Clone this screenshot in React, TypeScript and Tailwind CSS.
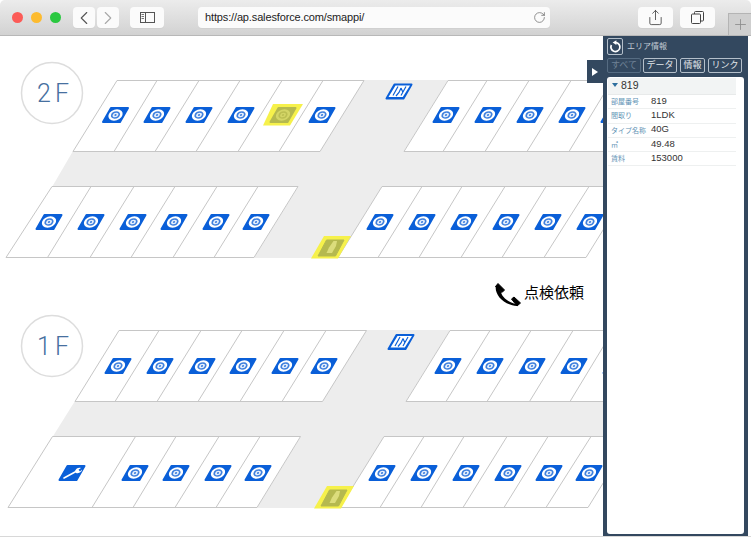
import React from "react";
import { ChevronLeft, ChevronRight, Share, RotateCw, Plus } from "lucide-react";

const BLUE = "#0a5fd8";
const LINE = "#c6c6c6";
const GREY = "#ededed";

function Ring({ fg, mid, hi }: { fg: string; mid: string; hi: string }) {
  return (
    <g transform="skewX(-15)">
      <ellipse cx="0" cy="0" rx="7" ry="5.8" fill={fg} />
      <ellipse cx="0" cy="0" rx="4.5" ry="3.7" fill={mid} />
      <ellipse cx="0" cy="0" rx="2.8" ry="2.3" fill={hi} />
      <ellipse cx="0" cy="0" rx="1.1" ry="0.9" fill={mid} />
    </g>
  );
}

function Base({ x, y, fill = BLUE, children }: { x: number; y: number; fill?: string; children?: React.ReactNode }) {
  return (
    <g transform={`translate(${x} ${y})`}>
      <polygon points="-4.5,-7 12.5,-7 4.5,7 -12.5,7" fill={fill} stroke={fill} strokeWidth="2" strokeLinejoin="round" />
      {children}
    </g>
  );
}

function Park({ x, y }: { x: number; y: number }) {
  return (
    <Base x={x} y={y}>
      <Ring fg="#ffffff" mid="#3f80de" hi="#e6effc" />
    </Base>
  );
}

function ParkSelected({ x, y }: { x: number; y: number }) {
  return (
    <g>
      <g transform={`translate(${x} ${y})`}>
        <polygon points="-10,-11 20,-11 7,10.5 -20,10.5" fill="#f6f14b" />
      </g>
      <Base x={x} y={y} fill="#b5b94f">
        <Ring fg="#d3d566" mid="#bcbf52" hi="#d3d566" />
      </Base>
    </g>
  );
}

function Wrench({ x, y }: { x: number; y: number }) {
  return (
    <Base x={x} y={y}>
      <path d="M-8 5 L4 -1.5" stroke="#fff" strokeWidth="1.6" strokeLinecap="round" />
      <path d="M3 -2 C4 -5 7 -6 9 -5 L6.5 -3.2 L8 -1.5 L10 -3.4 C10 -1 7 1 4 0 Z" fill="#fff" />
    </Base>
  );
}

function Stairs({ x, y }: { x: number; y: number }) {
  return (
    <Base x={x} y={y}>
      <polygon points="-3.5,-6 11,-6 3.8,5.5 -10.5,5.5" fill="#fff" />
      <path d="M-1 -5 L-6 4 M2 -3.5 L0 1 L-3 4.5 M2 -3.5 L4 1 M7 -5 L2 4" stroke={BLUE} strokeWidth="1.2" fill="none" />
    </Base>
  );
}

function Extinguisher({ x, y }: { x: number; y: number }) {
  return (
    <g transform={`translate(${x} ${y})`}>
      <polygon points="-7,-11 20,-11 7,11.5 -20,11.5" fill="#f6f14b" />
      <polygon points="-4.5,-7 13,-7 4.5,9 -13,9" fill="#b5b94f" stroke="#b5b94f" strokeWidth="1" strokeLinejoin="round" />
      <path d="M2.5 -6 L6 -6 L5 -1 L1 6 L-4.5 6 L-2 0.5 Z" fill="#dcdd7c" />
    </g>
  );
}

type Floor = {
  label: string;
  top: number;
  circleY: number;
  viewY: number;
  viewH: number;
  topLeft: [number, number][];
  topRight: [number, number][];
  botLeft: [number, number][];
  botRight: [number, number][];
  cross: string;
  children: React.ReactNode;
};

function Block({ pairs, y1, y2 }: { pairs: [number, number][]; y1: number; y2: number }) {
  const a = pairs[0];
  const z = pairs[pairs.length - 1];
  return (
    <g stroke={LINE} strokeWidth="1" fill="none">
      <polygon points={`${a[0]},${y1} ${z[0]},${y1} ${z[1]},${y2} ${a[1]},${y2}`} fill="#fff" stroke="none" />
      <line x1={a[0]} y1={y1} x2={z[0]} y2={y1} />
      <line x1={a[1]} y1={y2} x2={z[1]} y2={y2} />
      {pairs.map((p, i) => (
        <line key={i} x1={p[0]} y1={y1} x2={p[1]} y2={y2} />
      ))}
    </g>
  );
}

function FloorPlan({ f }: { f: Floor }) {
  const t = f.top;
  return (
    <svg className="block w-[751px]" style={{ height: f.viewH }} viewBox={`0 ${f.viewY} 751 ${f.viewH}`}>
      <polygon points={f.cross} fill={GREY} />
      <Block pairs={f.topLeft} y1={t + 0.5} y2={t + 71.5} />
      <Block pairs={f.topRight} y1={t + 0.5} y2={t + 71.5} />
      <Block pairs={f.botLeft} y1={t + 106.5} y2={t + 177.5} />
      <Block pairs={f.botRight} y1={t + 106.5} y2={t + 177.5} />
      <circle cx="52" cy={f.circleY} r="30.5" fill="#fff" stroke="#dddddd" strokeWidth="1.5" />
      <text
        x="52.5"
        y={f.circleY + 9}
        textAnchor="middle"
        fill="#47709f"
        fontSize="25"
        fontWeight="300"
        letterSpacing="-1"
        fontFamily="Roboto, 'Liberation Sans', sans-serif"
      >
        {f.label}
      </text>
      {f.children}
    </svg>
  );
}

const floor2: Floor = {
  label: "2 F",
  top: 80,
  circleY: 93,
  viewY: 36,
  viewH: 236,
  cross: "364,80 448,80 404,151 640,151 640,187 382,187 338,258 254,258 298,187 52,187 73,151 320,151",
  topLeft: [[117, 73], [157, 114], [199, 155], [240, 196], [282, 238], [323, 279], [364, 320]],
  topRight: [[448, 404], [487, 443], [529, 485], [571, 527], [612, 569], [654, 610]],
  botLeft: [[52, 6], [91, 47.5], [134, 90], [175, 131], [217, 173], [258, 214], [298, 254]],
  botRight: [[382, 338], [422, 378], [462, 419], [505, 461], [546, 502], [589, 544], [630, 586]],
  children: (
    <>
      {[115.5, 157, 199, 241, 322].map((x) => <Park key={x} x={x} y={115} />)}
      <ParkSelected x={283} y={115} />
      {[446, 488, 530, 572, 614].map((x) => <Park key={x} x={x} y={115} />)}
      {[49, 91, 133, 174, 216, 256].map((x) => <Park key={x} x={x} y={222} />)}
      {[380, 422, 464, 506, 548, 590].map((x) => <Park key={x} x={x} y={222} />)}
      <Stairs x={399} y={91.5} />
      <Extinguisher x={331} y={247} />
    </>
  ),
};

const floor1: Floor = {
  label: "1 F",
  top: 330,
  circleY: 346,
  viewY: 312,
  viewH: 225,
  cross: "366.5,330 450,330 406,401 640,401 640,437 384,437 340,508 257,508 300.5,437 52.5,437 75,401 322.5,401",
  topLeft: [[119, 75], [159, 115], [201, 157], [242, 198], [284, 240], [326, 282], [366.5, 322.5]],
  topRight: [[450, 406], [490, 446], [531, 487], [573, 529.5], [613, 570], [655, 612]],
  botLeft: [[52.5, 8], [135.5, 92], [176, 133], [219, 175], [260, 216], [300.5, 257]],
  botRight: [[384, 340], [424, 380], [464, 421], [507, 463], [548, 504], [591, 546], [632, 588]],
  children: (
    <>
      {[118, 160, 202, 243, 285, 324].map((x) => <Park key={x} x={x} y={366} />)}
      {[448, 490, 532, 574, 616].map((x) => <Park key={x} x={x} y={366} />)}
      <Wrench x={72} y={473} />
      {[135, 176, 218, 258].map((x) => <Park key={x} x={x} y={473} />)}
      {[382, 424, 466, 508, 549, 589].map((x) => <Park key={x} x={x} y={473} />)}
      <Stairs x={401} y={342} />
      <Extinguisher x={334} y={497} />
    </>
  ),
};

const rows: [string, string][] = [
  ["部屋番号", "819"],
  ["間取り", "1LDK"],
  ["タイプ名称", "40G"],
  ["㎡", "49.48"],
  ["賃料", "153000"],
];

function ToolButton({ className, children }: { className: string; children: React.ReactNode }) {
  return (
    <div className={`flex h-[21px] items-center justify-center rounded-[4px] bg-[#fbfbfb] shadow-[0_1px_0_#d0d0d0] ${className}`}>
      {children}
    </div>
  );
}

function PanelTab({ label, className, muted }: { label: string; className: string; muted?: boolean }) {
  return (
    <div
      className={`flex h-[15px] items-center justify-center rounded-[2px] border text-[9px] leading-none ${
        muted ? "border-[#566c82] text-[#6f8296]" : "border-[#b4bfca] text-[#e2e7ec]"
      } ${className}`}
    >
      {label}
    </div>
  );
}

export default function App() {
  return (
    <div className="relative h-[537px] w-[751px] overflow-hidden border-b border-[#d8d8d8] bg-white font-['Liberation_Sans','Noto_Sans_CJK_JP',sans-serif]">
      <header className="flex h-9 items-center rounded-t-[5px] border-b border-[#b8b8b8] bg-gradient-to-b from-[#ececec] to-[#d2d2d2] pl-3">
        <div className="flex gap-2">
          <span className="h-[11px] w-[11px] rounded-full bg-[#fc5b57]" />
          <span className="h-[11px] w-[11px] rounded-full bg-[#fdbb2f]" />
          <span className="h-[11px] w-[11px] rounded-full bg-[#2ac840]" />
        </div>
        <ToolButton className="ml-3 w-[22px]">
          <ChevronLeft size={24} strokeWidth={1.2} className="text-[#555555]" />
        </ToolButton>
        <ToolButton className="ml-[2px] w-[22px]">
          <ChevronRight size={24} strokeWidth={1.2} className="text-[#a8a8a8]" />
        </ToolButton>
        <ToolButton className="ml-[11px] w-[34px]">
          <svg width="15" height="12" viewBox="0 0 15 12" fill="none" stroke="#555" strokeWidth="1">
            <rect x="0.5" y="0.5" width="14" height="10" />
            <line x1="5.5" y1="0.5" x2="5.5" y2="10.5" />
            <path d="M1.5 2.5H4M1.5 4.5H4M1.5 6.5H4" strokeWidth="0.8" />
          </svg>
        </ToolButton>
        <ToolButton className="ml-[34px] w-[352px] !justify-between pl-[7px] pr-[4px]">
          <span className="text-[11px] tracking-[-0.14px] text-[#222222]">https://ap.salesforce.com/smappi/</span>
          <RotateCw size={13} strokeWidth={1.3} className="text-[#666666]" />
        </ToolButton>
        <ToolButton className="ml-[88px] w-[35px]">
          <Share size={17} strokeWidth={1.2} className="text-[#444444]" />
        </ToolButton>
        <ToolButton className="ml-[7px] w-[35px]">
          <svg width="13" height="13" viewBox="0 0 13 13" fill="none" stroke="#444" strokeWidth="1">
            <rect x="0.5" y="3" width="9" height="9.5" rx="1" />
            <path d="M3.5 3V1.5a1 1 0 0 1 1-1h7a1 1 0 0 1 1 1v7.5a1 1 0 0 1-1 1H9.5" />
          </svg>
        </ToolButton>
        <div className="ml-[13px] flex h-[22px] w-[23px] items-center justify-center self-end border-l border-t border-[#b4b4b4] bg-[#cfcfcf]">
          <Plus size={17} strokeWidth={1.2} className="text-[#8b8b8b]" />
        </div>
      </header>

      <main className="relative">
        <FloorPlan f={floor2} />
        <div className="flex h-10 items-center justify-end pr-[167px]">
          <svg width="28" height="28" viewBox="0 0 28 28" className="mr-[3px] mt-[3px]">
            <path d="M5 3.5 L11.5 10 L9 12.5 L2.5 6.5 Z" fill="#000" stroke="#000" strokeWidth="1" strokeLinejoin="round" />
            <path d="M18.5 19 L21 17 L27.5 23 L24 26 Z" fill="#000" stroke="#000" strokeWidth="1" strokeLinejoin="round" />
            <path d="M2.8 6 C1.5 14 10 25 24 26 L25 24.5 C15 23 8 16 8 11.5 Z" fill="#000" />
          </svg>
          <span className="text-[15px] leading-none text-black">点検依頼</span>
        </div>
        <FloorPlan f={floor1} />

        <aside className="absolute bottom-0 left-[603px] top-0 flex w-[145px] flex-col bg-[#33485f] px-[4px] pb-[3px] pt-[2px]">
          <div className="absolute left-[-16px] top-[24px] flex h-[23px] w-4 items-center justify-center bg-[#33485f]">
            <span className="h-0 w-0 border-y-[4px] border-l-[6px] border-y-transparent border-l-white" />
          </div>
          <div className="flex h-[17px] items-center">
            <div className="flex h-[17px] w-[16px] items-center justify-center rounded-[2px] border border-[#b4bfca]">
              <svg width="13" height="13" viewBox="0 0 13 13" fill="none">
                <path d="M7 2.6 A4.5 4.5 0 1 1 2.4 5" stroke="#fff" strokeWidth="1.7" />
                <path d="M3.6 2.6 L7.4 0.2 L7.4 5 Z" fill="#fff" />
              </svg>
            </div>
            <span className="ml-[4px] text-[8px] leading-none text-[#c3ccd5]">エリア情報</span>
          </div>
          <div className="mt-[3px] flex">
            <PanelTab label="すべて" muted className="w-[34px]" />
            <PanelTab label="データ" className="ml-[2px] w-[34px]" />
            <PanelTab label="情報" className="ml-[3px] w-[25px]" />
            <PanelTab label="リンク" className="ml-[3px] w-[34px]" />
          </div>
          <div className="mt-[4px] flex-1 rounded-[3px] bg-white px-[1px] pt-[1px]">
            <div className="flex h-[17px] w-[128px] items-center border-b border-[#e8eaea] bg-[#f2f4f4] pb-[2px] pl-[4px] text-[10.5px] leading-none text-[#333333]">
              <span className="mr-[2px] h-0 w-0 border-x-[3px] border-t-[4px] border-x-transparent border-t-[#2f6f9f]" />
              <span className="ml-[1px]">819</span>
            </div>
            {rows.map(([k, v]) => (
              <div key={k} className="flex h-[14.3px] w-[128px] items-center border-b border-[#eef0f0]">
                <span className="ml-[3px] w-[40px] whitespace-nowrap text-[7px] leading-none text-[#5f93b5]">{k}</span>
                <span className="pb-[2px] text-[9.5px] leading-none text-[#333333]">{v}</span>
              </div>
            ))}
          </div>
        </aside>
      </main>
    </div>
  );
}
